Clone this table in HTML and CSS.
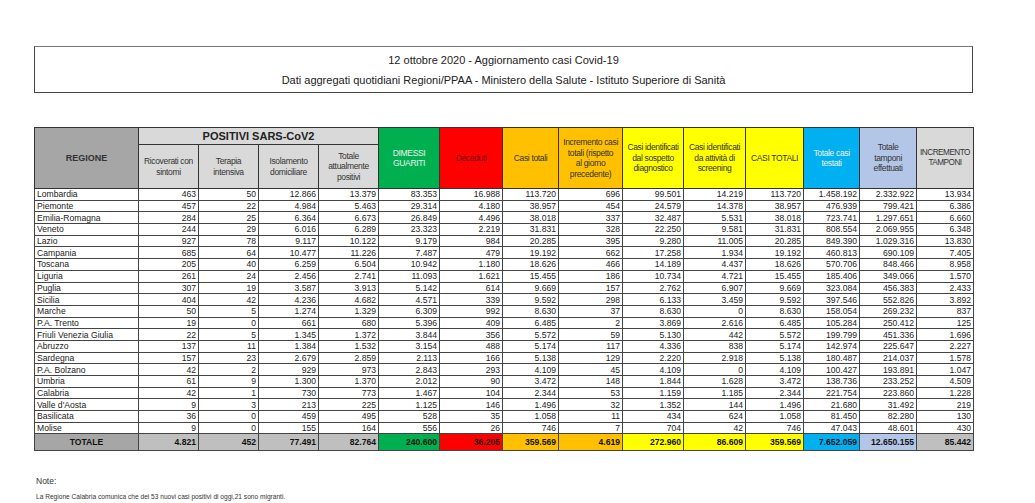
FILE: index.html
```html
<!DOCTYPE html>
<html lang="it">
<head>
<meta charset="utf-8">
<link rel="stylesheet" href="styles.css">
</head>
<body>
<div class="page">
  <div class="titlebox">
    <div class="t1">12 ottobre 2020 - Aggiornamento casi Covid-19</div>
    <div class="t2">Dati aggregati quotidiani Regioni/PPAA - Ministero della Salute - Istituto Superiore di Sanità</div>
  </div>
  <table class="data">
    <colgroup>
      <col class="c-reg"><col class="c60"><col class="c60"><col class="c60"><col class="c60">
      <col class="c61"><col class="c63"><col class="c56"><col class="c64"><col class="c61">
      <col class="c62"><col class="c58"><col class="c56"><col class="c57"><col class="c57">
    </colgroup>
    <thead>
      <tr class="h1">
        <th rowspan="2" class="hreg">REGIONE</th>
        <th colspan="4" class="hpos">POSITIVI SARS-CoV2</th>
        <th rowspan="2" class="green light">DIMESSI<br>GUARITI</th>
        <th rowspan="2" class="red dark">Deceduti</th>
        <th rowspan="2" class="orange">Casi totali</th>
        <th rowspan="2" class="orange">Incremento casi<br>totali (rispetto<br>al giorno<br>precedente)</th>
        <th rowspan="2" class="yellow">Casi identificati<br>dal sospetto<br>diagnostico</th>
        <th rowspan="2" class="yellow">Casi identificati<br>da attività di<br>screening</th>
        <th rowspan="2" class="yellow">CASI TOTALI</th>
        <th rowspan="2" class="blue light">Totale casi<br>testati</th>
        <th rowspan="2" class="lblue">Totale<br>tamponi<br>effettuati</th>
        <th rowspan="2" class="lgray tight">INCREMENTO<br>TAMPONI</th>
      </tr>
      <tr class="h2">
        <th class="lgray">Ricoverati con<br>sintomi</th>
        <th class="lgray">Terapia<br>intensiva</th>
        <th class="lgray">Isolamento<br>domiciliare</th>
        <th class="lgray">Totale<br>attualmente<br>positivi</th>
      </tr>
    </thead>
    <tbody>
      <tr><td>Lombardia</td><td>463</td><td>50</td><td>12.866</td><td>13.379</td><td>83.353</td><td>16.988</td><td>113.720</td><td>696</td><td>99.501</td><td>14.219</td><td>113.720</td><td>1.458.192</td><td>2.332.922</td><td>13.934</td></tr>
      <tr><td>Piemonte</td><td>457</td><td>22</td><td>4.984</td><td>5.463</td><td>29.314</td><td>4.180</td><td>38.957</td><td>454</td><td>24.579</td><td>14.378</td><td>38.957</td><td>476.939</td><td>799.421</td><td>6.386</td></tr>
      <tr><td>Emilia-Romagna</td><td>284</td><td>25</td><td>6.364</td><td>6.673</td><td>26.849</td><td>4.496</td><td>38.018</td><td>337</td><td>32.487</td><td>5.531</td><td>38.018</td><td>723.741</td><td>1.297.651</td><td>6.660</td></tr>
      <tr><td>Veneto</td><td>244</td><td>29</td><td>6.016</td><td>6.289</td><td>23.323</td><td>2.219</td><td>31.831</td><td>328</td><td>22.250</td><td>9.581</td><td>31.831</td><td>808.554</td><td>2.069.955</td><td>6.348</td></tr>
      <tr><td>Lazio</td><td>927</td><td>78</td><td>9.117</td><td>10.122</td><td>9.179</td><td>984</td><td>20.285</td><td>395</td><td>9.280</td><td>11.005</td><td>20.285</td><td>849.390</td><td>1.029.316</td><td>13.830</td></tr>
      <tr><td>Campania</td><td>685</td><td>64</td><td>10.477</td><td>11.226</td><td>7.487</td><td>479</td><td>19.192</td><td>662</td><td>17.258</td><td>1.934</td><td>19.192</td><td>460.813</td><td>690.109</td><td>7.405</td></tr>
      <tr><td>Toscana</td><td>205</td><td>40</td><td>6.259</td><td>6.504</td><td>10.942</td><td>1.180</td><td>18.626</td><td>466</td><td>14.189</td><td>4.437</td><td>18.626</td><td>570.706</td><td>848.466</td><td>8.958</td></tr>
      <tr><td>Liguria</td><td>261</td><td>24</td><td>2.456</td><td>2.741</td><td>11.093</td><td>1.621</td><td>15.455</td><td>186</td><td>10.734</td><td>4.721</td><td>15.455</td><td>185.406</td><td>349.066</td><td>1.570</td></tr>
      <tr><td>Puglia</td><td>307</td><td>19</td><td>3.587</td><td>3.913</td><td>5.142</td><td>614</td><td>9.669</td><td>157</td><td>2.762</td><td>6.907</td><td>9.669</td><td>323.084</td><td>456.383</td><td>2.433</td></tr>
      <tr><td>Sicilia</td><td>404</td><td>42</td><td>4.236</td><td>4.682</td><td>4.571</td><td>339</td><td>9.592</td><td>298</td><td>6.133</td><td>3.459</td><td>9.592</td><td>397.546</td><td>552.826</td><td>3.892</td></tr>
      <tr><td>Marche</td><td>50</td><td>5</td><td>1.274</td><td>1.329</td><td>6.309</td><td>992</td><td>8.630</td><td>37</td><td>8.630</td><td>0</td><td>8.630</td><td>158.054</td><td>269.232</td><td>837</td></tr>
      <tr><td>P.A. Trento</td><td>19</td><td>0</td><td>661</td><td>680</td><td>5.396</td><td>409</td><td>6.485</td><td>2</td><td>3.869</td><td>2.616</td><td>6.485</td><td>105.284</td><td>250.412</td><td>125</td></tr>
      <tr><td>Friuli Venezia Giulia</td><td>22</td><td>5</td><td>1.345</td><td>1.372</td><td>3.844</td><td>356</td><td>5.572</td><td>59</td><td>5.130</td><td>442</td><td>5.572</td><td>199.799</td><td>451.336</td><td>1.696</td></tr>
      <tr><td>Abruzzo</td><td>137</td><td>11</td><td>1.384</td><td>1.532</td><td>3.154</td><td>488</td><td>5.174</td><td>117</td><td>4.336</td><td>838</td><td>5.174</td><td>142.974</td><td>225.647</td><td>2.227</td></tr>
      <tr><td>Sardegna</td><td>157</td><td>23</td><td>2.679</td><td>2.859</td><td>2.113</td><td>166</td><td>5.138</td><td>129</td><td>2.220</td><td>2.918</td><td>5.138</td><td>180.487</td><td>214.037</td><td>1.578</td></tr>
      <tr><td>P.A. Bolzano</td><td>42</td><td>2</td><td>929</td><td>973</td><td>2.843</td><td>293</td><td>4.109</td><td>45</td><td>4.109</td><td>0</td><td>4.109</td><td>100.427</td><td>193.891</td><td>1.047</td></tr>
      <tr><td>Umbria</td><td>61</td><td>9</td><td>1.300</td><td>1.370</td><td>2.012</td><td>90</td><td>3.472</td><td>148</td><td>1.844</td><td>1.628</td><td>3.472</td><td>138.736</td><td>233.252</td><td>4.509</td></tr>
      <tr><td>Calabria</td><td>42</td><td>1</td><td>730</td><td>773</td><td>1.467</td><td>104</td><td>2.344</td><td>53</td><td>1.159</td><td>1.185</td><td>2.344</td><td>221.754</td><td>223.860</td><td>1.228</td></tr>
      <tr><td>Valle d'Aosta</td><td>9</td><td>3</td><td>213</td><td>225</td><td>1.125</td><td>146</td><td>1.496</td><td>32</td><td>1.352</td><td>144</td><td>1.496</td><td>21.680</td><td>31.492</td><td>219</td></tr>
      <tr><td>Basilicata</td><td>36</td><td>0</td><td>459</td><td>495</td><td>528</td><td>35</td><td>1.058</td><td>11</td><td>434</td><td>624</td><td>1.058</td><td>81.450</td><td>82.280</td><td>130</td></tr>
      <tr><td>Molise</td><td>9</td><td>0</td><td>155</td><td>164</td><td>556</td><td>26</td><td>746</td><td>7</td><td>704</td><td>42</td><td>746</td><td>47.043</td><td>48.601</td><td>430</td></tr>
    </tbody>
    <tfoot>
      <tr class="tot">
        <td class="hreg">TOTALE</td>
        <td class="mgray">4.821</td><td class="mgray">452</td><td class="mgray">77.491</td><td class="mgray">82.764</td>
        <td class="green">240.600</td><td class="red">36.205</td><td class="orange">359.569</td><td class="orange">4.619</td>
        <td class="yellow">272.960</td><td class="yellow">86.609</td><td class="yellow">359.569</td>
        <td class="blue">7.652.059</td><td class="lblue">12.650.155</td><td class="mgray">85.442</td>
      </tr>
    </tfoot>
  </table>
  <div class="notes">
    <div class="note-title">Note:</div>
    <div class="note-text">La Regione Calabria comunica che dei 53 nuovi casi positivi di oggi,21 sono migranti.</div>
  </div>
</div>
</body>
</html>
```

FILE: styles.css
```css
html, body {
  margin: 0;
  padding: 0;
  background: #ffffff;
}
body {
  font-family: "Liberation Sans", Arial, sans-serif;
  color: #222;
}
.page {
  width: 939px;
  padding: 46px 0 0 34px;
}
.titlebox {
  box-sizing: border-box;
  height: 47px;
  border: 1px solid #444;
  border-top-color: #777;
  text-align: center;
  font-size: 11px;
  color: #222;
  padding-top: 6px;
}
.titlebox .t1 {
  line-height: 14px;
}
.titlebox .t2 {
  line-height: 14px;
  margin-top: 6px;
}
.data {
  margin-top: 34px;
  width: 939px;
  table-layout: fixed;
  border-collapse: collapse;
  font-size: 8.6px;
}
.c-reg { width: 104px; }
.c56 { width: 56px; }
.c57 { width: 57px; }
.c58 { width: 58px; }
.c60 { width: 60px; }
.c61 { width: 61px; }
.c62 { width: 62px; }
.c63 { width: 63px; }
.c64 { width: 64px; }

.data th {
  font-weight: normal;
  font-size: 8.5px;
  letter-spacing: -0.35px;
  border: 1px solid #333;
  padding: 0 1px;
  text-align: center;
  line-height: 10.5px;
  color: #333;
  white-space: nowrap;
  overflow: hidden;
}
.data th.tight {
  font-size: 8.2px;
  letter-spacing: -0.5px;
}
.data tr.h1 th {
  height: 16px;
}
.data tr.h2 th {
  height: 43px;
}
.data th.hreg {
  font-weight: bold;
  font-size: 9px;
  letter-spacing: 0;
}
.data th.hpos {
  background: #d9d9d9;
  font-weight: bold;
  font-size: 11px;
  letter-spacing: 0;
  color: #222;
}
.hreg { background: #a6a6a6; }
.lgray { background: #d9d9d9; }
.mgray { background: #bfbfbf; }
.green { background: #00b050; }
.red { background: #ff0000; }
.orange { background: #ffc000; }
.yellow { background: #ffff00; }
.blue { background: #00b0f0; }
.lblue { background: #b4c6e7; }
.data th.light { color: #eef4ee; }
.data th.dark { color: #6a1010; }

.data td {
  border: 1px solid #444;
  border-top-color: #555;
  padding: 0 2px;
  height: 10.7px;
  line-height: 10px;
  text-align: right;
  white-space: nowrap;
  overflow: hidden;
}
.data tbody td:first-child {
  text-align: left;
}
.data tr.tot td {
  height: 16px;
  font-weight: bold;
  color: #111;
}
.data tr.tot td.hreg {
  text-align: center;
}
.notes {
  margin-top: 24px;
  padding-left: 2px;
}
.note-title {
  font-size: 8.5px;
  color: #333;
  line-height: 12px;
}
.note-text {
  font-size: 6.6px;
  color: #333;
  margin-top: 5px;
  line-height: 9px;
}
```
